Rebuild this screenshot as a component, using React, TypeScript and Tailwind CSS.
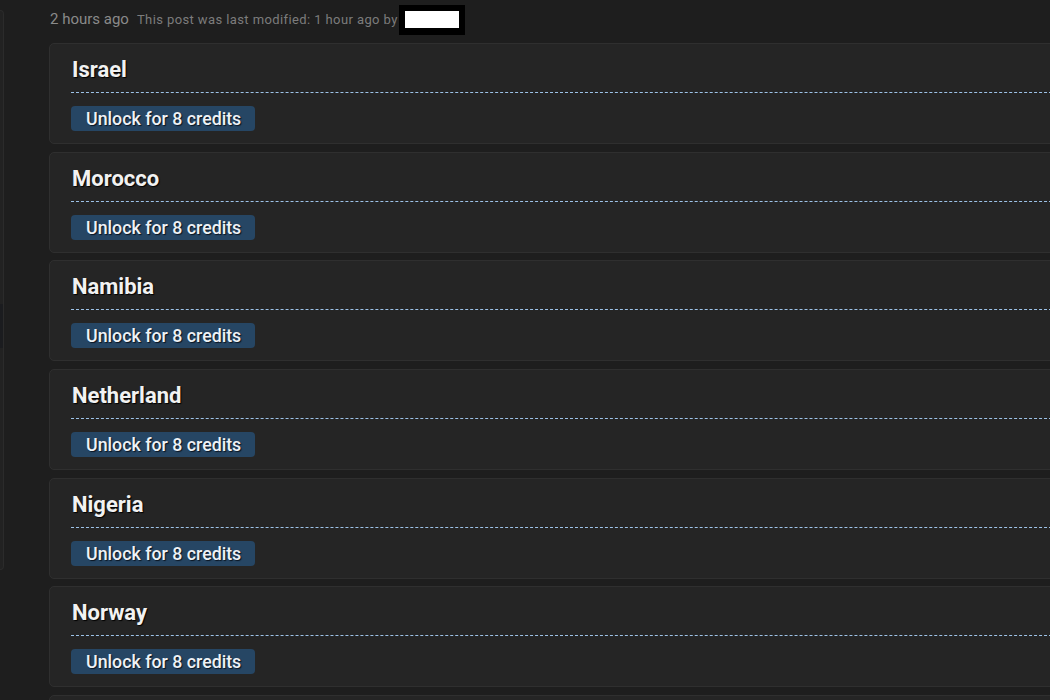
const countries = ["Israel", "Morocco", "Namibia", "Netherland", "Nigeria", "Norway"];

function LockedCard({ name }: { name: string }) {
  return (
    <div className="w-[1040px] shrink-0 rounded-[5px] border border-[#2f2f2f] bg-[#252525] px-[21px] pt-[13px] pb-[12px]">
      <div className="border-b border-dashed border-[#9ec3e8] pb-[9px]">
        <h2 className="pl-[1px] text-[22px] leading-[26px] font-bold text-[#f2f2f2] [text-shadow:1px_1px_1px_#000]">
          {name}
        </h2>
      </div>
      <button className="mt-[13px] flex h-[25px] w-[184px] items-center rounded-[4px] bg-[#264664] pt-[1px] pl-[15px] text-[17.8px] leading-none font-medium text-[#eef2f6] [text-shadow:1px_1px_1px_#0a1420]">
        Unlock for 8 credits
      </button>
    </div>
  );
}

export default function App() {
  return (
    <div className="flex h-[700px] w-[1050px] overflow-hidden bg-[#1e1e1e] font-['Roboto','Liberation_Sans',sans-serif]">
      <aside className="mt-[10px] h-[560px] w-[4px] shrink-0 rounded-r-[6px] border border-l-0 border-[#2b2b2b] bg-[#222222]">
        <div className="mt-[293px] h-[44px] bg-[#1b1c1f]" />
      </aside>
      <main className="ml-[45px] flex flex-col">
        <div className="flex h-[43px] shrink-0 items-center pb-[4px]">
          <span className="pl-[1px] text-[15px] text-[#8a8a8a]">2 hours ago</span>
          <span className="ml-[8px] text-[13px] tracking-[0.4px] text-[#7c7c7c]">This post was last modified: 1 hour ago by</span>
          <span className="ml-[1px] flex h-[30px] w-[66px] items-center justify-center bg-black">
            <span className="h-[17px] w-[54px] bg-white" />
          </span>
        </div>
        <div className="flex shrink-0 flex-col gap-[7.67px]">
          {countries.map((c) => (
            <LockedCard key={c} name={c} />
          ))}
          {/* next card peeks in at the bottom edge */}
          <div className="h-[100px] w-[1040px] shrink-0 rounded-[5px] border border-[#2f2f2f] bg-[#252525]" />
        </div>
      </main>
    </div>
  );
}
